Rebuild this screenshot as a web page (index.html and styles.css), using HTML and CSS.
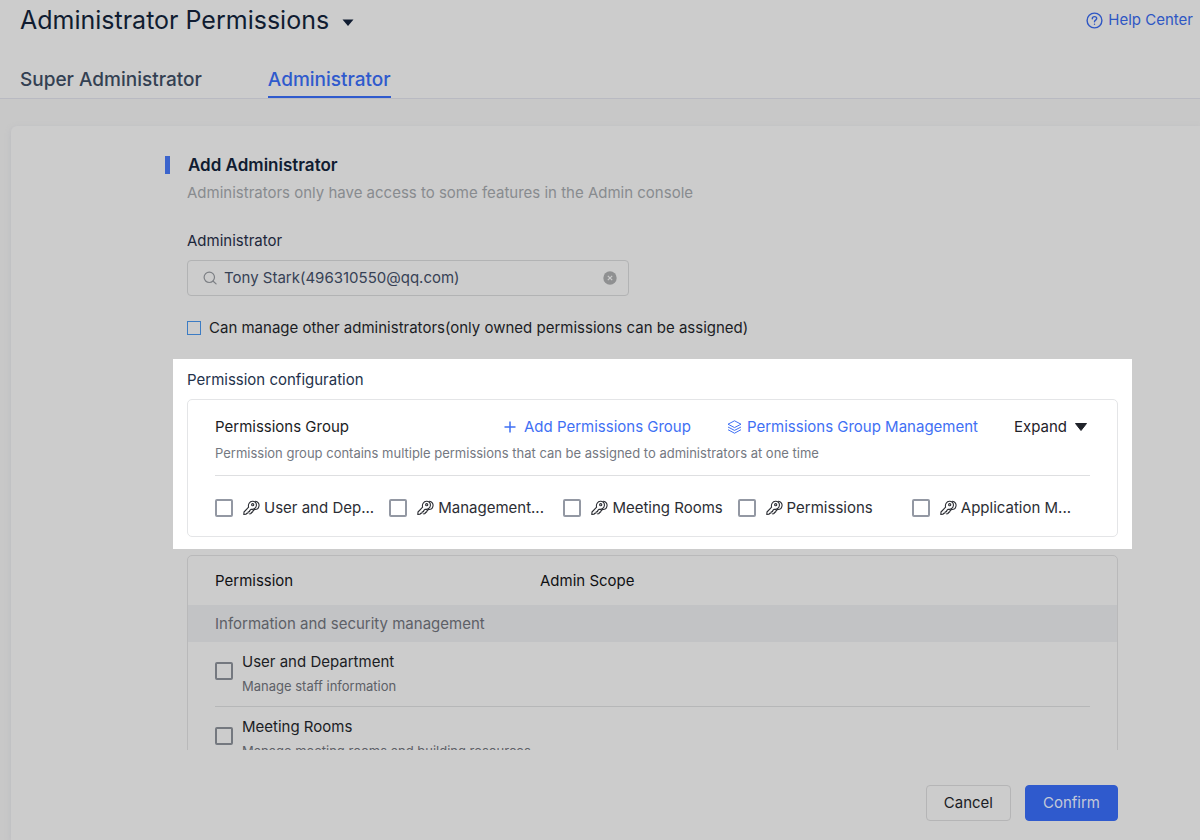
FILE: index.html
```html
<!DOCTYPE html>
<html lang="en">
<head>
<meta charset="utf-8">
<title>Administrator Permissions</title>
<link rel="stylesheet" href="styles.css">
</head>
<body>
<svg class="defs" aria-hidden="true">
  <symbol id="key" viewBox="0 0 18 18">
    <g fill="none" stroke="currentColor" stroke-width="1.1" stroke-linejoin="round" stroke-linecap="round">
      <path d="M6.6 8.2C5.8 5.4 7.6 2.3 10.4 2.2c2.500-.1 4.300 2 4 4.300-.3 2.600-2.600 4.300-5.200 3.700L7.800 11.500l-.3 1.200-1.300.1-.3 1.300-1.300.1-.5 1.100-2.300.1.200-2.400z"/>
      <path d="M13.300 2.300c2.600.3 4.100 2.300 3.700 4.600-.4 2.500-2.300 3.900-4.600 3.600l-1.500 1.500-.3 1.100-1.200.2-.3 1.200-1.400.4"/>
      <circle cx="10.700" cy="5.700" r="1.100"/>
    </g>
  </symbol>
</svg>
<header class="top">
  <div class="title-row">
    <h1>Administrator Permissions</h1>
    <button class="caret-btn" type="button" aria-label="Switch page"><svg width="12" height="7" viewBox="0 0 12 7"><path d="M0.500 0.500h11L6 7z" fill="currentColor"/></svg></button>
    <a class="help" href="#">
      <svg width="17" height="17" viewBox="0 0 17 17" fill="none" stroke="currentColor" stroke-width="1.400" stroke-linecap="round"><circle cx="8.500" cy="8.500" r="7.400"/><path d="M6.300 6.700c0-1.300 1-2.100 2.200-2.100s2.200.8 2.200 1.900c0 1.600-2.200 1.600-2.200 3.300"/><path d="M8.500 12.100v.2"/></svg>
      <span>Help Center</span>
    </a>
  </div>
  <nav class="tabs">
    <a class="tab" href="#">Super Administrator</a>
    <a class="tab active" href="#" aria-current="page">Administrator</a>
  </nav>
</header>
<main class="panel">
  <div class="content">
    <h2>Add Administrator</h2>
    <p class="intro">Administrators only have access to some features in the Admin console</p>
    <label class="field-label" for="admin">Administrator</label>
    <div class="search">
      <svg width="14" height="14" viewBox="0 0 14 14" fill="none" stroke="currentColor" stroke-width="1.200" stroke-linecap="round"><circle cx="6.300" cy="6.300" r="5.200"/><path d="M10.200 10.200l2.900 2.700"/></svg>
      <input id="admin" type="text" value="Tony Stark(496310550@qq.com)">
      <button class="clear" type="button" aria-label="Clear"><svg width="14" height="14" viewBox="0 0 14 14"><circle cx="7" cy="7" r="6.700" fill="#8f9091"/><path d="M4.800 4.800l4.400 4.400M9.200 4.800L4.800 9.200" stroke="#ccc" stroke-width="1.200"/></svg></button>
    </div>
    <label class="manage"><input class="box small" type="checkbox"><span>Can manage other administrators(only owned permissions can be assigned)</span></label>

    <section class="spotlight">
      <h3>Permission configuration</h3>
      <div class="card">
        <div class="card-head">
          <h4>Permissions Group</h4>
          <button class="link add" type="button"><svg width="12" height="12" viewBox="0 0 12 12"><path d="M6 0.500v11M0.500 6h11" stroke="currentColor" stroke-width="1.500"/></svg><span>Add Permissions Group</span></button>
          <button class="link manage-groups" type="button"><svg width="15" height="14" viewBox="0 0 15 14" fill="none" stroke="currentColor" stroke-width="1" stroke-linejoin="round"><path d="M7.500 0.800l6.500 3.400-6.500 3.400L1 4.200z"/><path d="M1 7l6.500 3.400L14 7"/><path d="M1 9.700l6.500 3.500L14 9.700"/></svg><span>Permissions Group Management</span></button>
          <button class="link expand" type="button"><span>Expand</span><svg width="12" height="8" viewBox="0 0 12 8"><path d="M0.500 0.500h11L6 7.500z" fill="currentColor" stroke="currentColor" stroke-linejoin="round"/></svg></button>
        </div>
        <p class="card-note">Permission group contains multiple permissions that can be assigned to administrators at one time</p>
        <div class="groups">
          <label><input class="box" type="checkbox"><svg class="key"><use href="#key"/></svg><span>User and Dep...</span></label>
          <label><input class="box" type="checkbox"><svg class="key"><use href="#key"/></svg><span>Management...</span></label>
          <label><input class="box" type="checkbox"><svg class="key"><use href="#key"/></svg><span>Meeting Rooms</span></label>
          <label><input class="box" type="checkbox"><svg class="key"><use href="#key"/></svg><span>Permissions</span></label>
          <label><input class="box" type="checkbox"><svg class="key"><use href="#key"/></svg><span>Application M...</span></label>
        </div>
      </div>
    </section>

    <div class="table-wrap">
      <table>
        <thead><tr><th class="name-col">Permission</th><th>Admin Scope</th></tr></thead>
        <tbody>
          <tr class="category"><td colspan="2">Information and security management</td></tr>
          <tr><td colspan="2"><label class="perm"><input class="box" type="checkbox"><span><span class="perm-name">User and Department</span><span class="perm-note">Manage staff information</span></span></label></td></tr>
          <tr><td colspan="2"><label class="perm"><input class="box" type="checkbox"><span><span class="perm-name">Meeting Rooms</span><span class="perm-note">Manage meeting rooms and building resources</span></span></label></td></tr>
        </tbody>
      </table>
    </div>
  </div>
  <footer class="actions">
    <button class="btn" type="button">Cancel</button>
    <button class="btn primary" type="button">Confirm</button>
  </footer>
</main>
</body>
</html>
```
FILE: styles.css
```css
* { box-sizing: border-box; }
body {
  margin: 0;
  height: 100vh;
  display: flex;
  flex-direction: column;
  overflow: hidden;
  background: #c8c8c8;
  color: #1b1d24;
  font-family: Inter, "Liberation Sans", sans-serif;
  font-size: 15px;
  line-height: 20px;
}
h1, h2, h3, h4, p { margin: 0; font-size: 15px; font-weight: 400; }
button, input { font: inherit; color: inherit; }
button { padding: 0; border: 0; background: none; }
a { text-decoration: none; }
svg { flex: none; }
.defs { position: absolute; width: 0; height: 0; }

.top { flex: none; background: #ccc; border-bottom: 1px solid #b9bac2; }
.title-row { display: flex; align-items: center; height: 40px; padding: 0 7px 0 20px; }
h1 { font-size: 25px; line-height: 32px; color: #101c31; }
.caret-btn { display: flex; margin: 4px 0 0 13px; color: #101c31; }
.help { display: flex; align-items: center; gap: 5px; margin-left: auto; color: #2f57c4; }
.tabs { display: flex; gap: 66px; padding: 24px 20px 0; font-size: 19px; font-weight: 500; line-height: 32px; }
.tab { color: #334052; border-bottom: 2px solid transparent; }
.tab.active { color: #2f5acd; border-color: #2f5acd; }

.panel {
  flex: 1;
  min-height: 0;
  display: flex;
  flex-direction: column;
  margin: 27px 0 0 11px;
  background: #ccc;
  border-radius: 6px 0 0 0;
  box-shadow: 0 2px 6px #b9babf;
}
.content { flex: 1; min-height: 0; overflow: hidden; padding: 28px 82px 0 154px; }
.content > * { margin-left: 22px; }
.content > h2 {
  margin-left: 0;
  padding-left: 18px;
  border-left: 5px solid #3b64cc;
  font-size: 17px;
  line-height: 18px;
  margin-top: 2px;
  font-weight: 600;
  color: #101c31;
}
.intro { margin-top: 9px; color: #888b8f; }
.field-label { display: block; margin-top: 28px; color: #1c273b; }
.search {
  display: flex;
  align-items: center;
  width: 442px;
  max-width: 100%;
  height: 36px;
  margin-top: 9px;
  padding: 0 11px 0 15px;
  border: 1px solid #b2b3b4;
  border-radius: 4px;
  color: #7c7f84;
}
.search input { flex: 1; min-width: 0; margin-left: 7px; padding: 0; border: 0; outline: 0; background: none; color: #364155; }
.clear { display: flex; }
.box {
  appearance: none;
  flex: none;
  width: 18px;
  height: 18px;
  margin: 0;
  border: 2px solid #9398a3;
  border-radius: 2px;
}
.box.small { width: 14px; height: 14px; border: 1px solid #3c7cc4; border-radius: 0; }
.manage { display: flex; align-items: center; gap: 8px; margin-top: 22px; }

.content > .spotlight { margin: 21px -14px 0 8px; padding: 11px 14px 12px; background: #fff; }
h3 { color: #24324b; }
.card { margin-top: 9px; padding: 17px 27px 18px; border: 1px solid #e4e5e7; border-radius: 5px; }
.card-head { display: flex; align-items: center; }
.link { display: flex; align-items: center; gap: 8px; color: #3f70f4; }
.add { margin-left: auto; }
.manage-groups { margin-left: 36px; gap: 5px; }
.expand { margin: 0 3px 0 36px; color: #1f2229; }
.card-note { margin-top: 6px; padding-bottom: 12px; border-bottom: 1px solid #dedfe1; font-size: 13px; color: #747881; }
.groups { display: grid; grid-template-columns: repeat(5, 1fr); margin: 22px 4px 0 0; }
.groups label { display: flex; align-items: center; white-space: nowrap; color: #2c2e34; }
.key { width: 18px; height: 18px; margin: 0 4px 0 9px; }

.table-wrap { margin-top: 6px; border: 1px solid #b9b9ba; border-radius: 5px; }
table { width: 100%; border-collapse: collapse; }
th { height: 49px; padding: 0 0 0 27px; font-weight: 400; text-align: left; color: #101114; }
th + th { padding-left: 0; }
.name-col { width: 352px; }
td { padding: 0 27px; }
.category td { height: 37px; background: #c2c3c5; color: #5d6067; }
.perm { display: flex; align-items: center; gap: 9px; height: 65px; border-bottom: 1px solid #b6b7b8; }
.perm .box { margin-top: -6px; border-color: #74787f; }
.perm-name, .perm-note { display: block; }
.perm-note { margin-top: 4px; font-size: 13px; color: #5d6067; }
.actions { flex: none; display: flex; justify-content: flex-end; gap: 14px; padding: 35px 82px 19px; }
.btn { height: 36px; padding: 0 17px; border: 1px solid #b5b5b6; border-radius: 4px; color: #1b1d24; }
.primary { background: #2f5acd; border-color: #2f5acd; color: #c3c9d8; }
```
